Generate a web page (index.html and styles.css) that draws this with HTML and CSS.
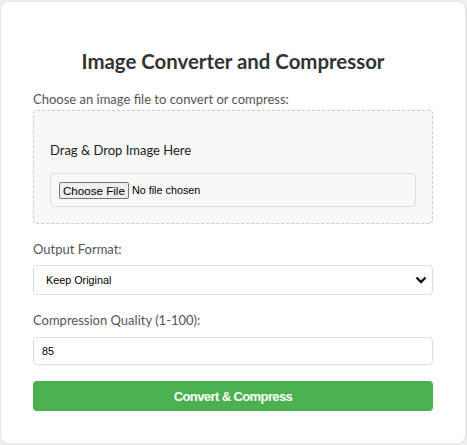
FILE: index.html
```html
<!DOCTYPE html>
<html lang="en">
<head>
<meta charset="utf-8">
<title>Image Converter and Compressor</title>
<link rel="stylesheet" href="styles.css">
</head>
<body>
<div class="card">
  <h1 class="title">Image Converter and Compressor</h1>
  <label class="label" for="file">Choose an image file to convert or compress:</label>
  <div class="dropzone">
    <p class="drop-text">Drag &amp; Drop Image Here</p>
    <div class="file-box">
      <span class="file-btn">Choose File</span><span class="file-name">No file chosen</span>
    </div>
  </div>
  <label class="label label-gap" for="fmt">Output Format:</label>
  <div class="select-wrap">
    <div class="field select" id="fmt">Keep Original</div>
    <svg class="chevron" width="12" height="8" viewBox="0 0 12 8"><path d="M1.5 1.5 L6 6 L10.5 1.5" fill="none" stroke="#111" stroke-width="2.4"/></svg>
  </div>
  <label class="label label-gap2" for="q">Compression Quality (1-100):</label>
  <div class="field input" id="q">85</div>
  <button class="submit" type="button">Convert &amp; Compress</button>
</div>
</body>
</html>
```
FILE: styles.css
```css
* { box-sizing: border-box; }
html, body { margin: 0; }
body {
  background: #efefef;
  padding: 2px 2px 2px 1px;
  font-family: Lato, "Open Sans", sans-serif;
}
.card {
  width: 464px;
  height: 441px;
  background: #fff;
  border-radius: 8px;
  box-shadow: 0 0 4px rgba(0,0,0,0.08);
  padding: 32px 32px;
  display: flex;
  flex-direction: column;
}
.title {
  margin: 14px 0 16px;
  text-align: center;
  font-size: 20.4px;
  font-weight: 700;
  color: #333;
  line-height: 26px;
}
.label {
  display: block;
  font-size: 13px;
  color: #555;
  line-height: 18px;
  margin-bottom: 2px;
}
.label-gap { margin-top: 16px; margin-bottom: 7px; }
.label-gap2 { margin-top: 16px; margin-bottom: 8px; }
.dropzone {
  border: 1px dashed #ccc;
  border-radius: 4px;
  background: #f8f8f8;
  padding: 16px;
  height: 114px;
}
.drop-text {
  margin: 14px 0 14px;
  font-size: 13px;
  line-height: 18px;
  color: #222;
}
.file-box {
  border: 1px solid #ddd;
  border-radius: 4px;
  height: 34px;
  padding: 0 8px;
  display: flex;
  align-items: center;
  font-family: "Liberation Sans", Arial, sans-serif;
  font-size: 11.6px;
  color: #000;
}
.file-btn {
  border: 1px solid #767676;
  background: #efefef;
  padding: 0 3px;
  height: 17px;
  line-height: 15px;
  border-radius: 2px;
  margin-right: 3px;
}
.file-name { font-size: 10.8px; }
.select-wrap { position: relative; }
.field {
  border: 1px solid #ddd;
  border-radius: 4px;
  background: #fff;
  font-family: "Liberation Sans", Arial, sans-serif;
  font-size: 10.8px;
  color: #000;
  display: flex;
  align-items: center;
}
.select { height: 30px; padding-left: 12px; }
.input { height: 29px; padding-left: 8px; }
.chevron { position: absolute; right: 6px; top: 11px; }
.submit {
  margin-top: 16px;
  height: 31px;
  border: none;
  border-radius: 4px;
  background: #4caf50;
  color: #fff;
  font-family: "Liberation Sans", Arial, sans-serif;
  font-size: 13px;
  font-weight: 700;
  letter-spacing: -0.6px;
  width: 100%;
}
```
